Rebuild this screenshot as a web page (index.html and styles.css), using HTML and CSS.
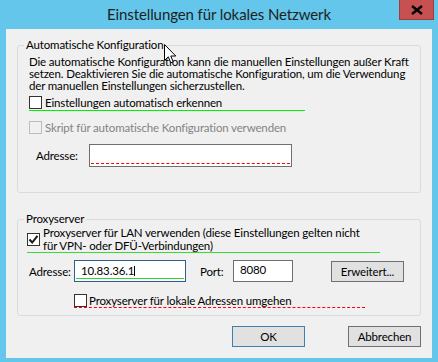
FILE: index.html
```html
<!DOCTYPE html>
<html>
<head>
<meta charset="utf-8">
<title>Einstellungen für lokales Netzwerk</title>
<link rel="stylesheet" href="styles.css">
</head>
<body>
<div class="window">
  <div class="titlebar">
    <span class="title">Einstellungen für lokales Netzwerk</span>
    <div class="close">
      <svg width="12" height="10" viewBox="0 0 12 10"><path d="M1 1 L11 9 M11 1 L1 9" stroke="#000" stroke-width="2.4"/></svg>
    </div>
  </div>

  <div class="client">
    <fieldset class="group group-auto">
      <legend>Automatische Konfiguration</legend>
      <div class="group-body">
        <p class="info">Die automatische Konfiguration kann die manuellen Einstellungen außer Kraft<br>setzen. Deaktivieren Sie die automatische Konfiguration, um die Verwendung<br>der manuellen Einstellungen sicherzustellen.</p>

        <label class="check mark-green">
          <span class="box"></span>
          <span>Einstellungen automatisch erkennen</span>
        </label>

        <label class="check disabled script-row">
          <span class="box"></span>
          <span>Skript für automatische Konfiguration verwenden</span>
        </label>

        <div class="field-row script-addr">
          <span class="field-label">Adresse:</span>
          <div class="textbox wide"><div class="dash-red"></div></div>
        </div>
      </div>
    </fieldset>

    <fieldset class="group group-proxy">
      <legend>Proxyserver</legend>
      <div class="group-body">
        <label class="check lan-row">
          <span class="box checked">
            <svg width="11" height="11" viewBox="0 0 11 11"><path d="M1.5 5.5 L4.2 8.5 L9.5 1.8" fill="none" stroke="#1a1a1a" stroke-width="2"/></svg>
          </span>
          <span>Proxyserver für LAN verwenden (diese Einstellungen gelten nicht<br>für VPN- oder DFÜ-Verbindungen)</span>
        </label>

        <div class="field-row proxy-addr">
          <span class="field-label">Adresse:</span>
          <div class="textbox addr focused"><span class="value">10.83.36.1</span><span class="caret"></span><span class="line-green"></span></div>
          <span class="field-label port-label">Port:</span>
          <div class="textbox port"><span class="value">8080</span></div>
          <button class="btn advanced">Erweitert...</button>
        </div>

        <label class="check bypass-row">
          <span class="box"></span>
          <span>Proxyserver für lokale Adressen umgehen</span>
        </label>
      </div>
    </fieldset>

    <div class="actions">
      <button class="btn default">OK</button>
      <button class="btn">Abbrechen</button>
    </div>
  </div>

  <svg class="pointer" width="13" height="21" viewBox="0 0 13 21">
    <path d="M0.5 0.5 L0.5 16.5 L4.3 12.8 L6.8 18.8 L9.2 17.8 L6.8 12 L11.8 12 Z" fill="#fff" stroke="#000" stroke-width="1"/>
  </svg>
</div>
</body>
</html>
```

FILE: styles.css
```css
body {
  margin: 0;
  background: #63c6ea;
  font-family: "Lato", "Liberation Sans", sans-serif;
  font-size: 11.5px;
  letter-spacing: -0.15px;
  color: #000;
}

.window {
  position: relative;
  width: 438px;
  height: 362px;
  background: #63c6ea;
  overflow: hidden;
}

/* title bar */
.titlebar {
  height: 29px;
  display: flex;
  align-items: center;
  justify-content: center;
}
.title {
  font-size: 15px;
  letter-spacing: -0.1px;
  color: #1e1e1e;
  margin-top: -1px;
}
.close {
  position: absolute;
  top: 0;
  left: 399px;
  width: 35px;
  height: 20px;
  box-sizing: border-box;
  background: #c75050;
  border: 1px solid #a03c3c;
  border-top: 0;
  display: flex;
  align-items: center;
  justify-content: center;
}

/* dialog body */
.client {
  margin: 0 6px;
  height: 329px;
  background: #f0f0f0;
  padding: 0 11px;
  display: flex;
  flex-direction: column;
}

.group {
  box-sizing: border-box;
  width: 404px;
  margin: 0;
  padding: 0;
  border: 1px solid #d5dce2;
  border-radius: 3px;
  min-width: 0;
}
.group legend {
  margin-left: 6px;
  padding: 0 2px;
  line-height: 14px;
}
.group-body {
  padding-left: 11px;
}
.group-auto {
  margin-top: 9px;
  padding-bottom: 25px;
}
.group-proxy {
  margin-top: 19px;
  padding-bottom: 7px;
}

.info {
  margin: 4px 0 0;
  line-height: 12px;
  white-space: nowrap;
}

/* checkboxes */
.check {
  display: flex;
  align-items: center;
  gap: 3px;
  line-height: 13px;
  white-space: nowrap;
}
.box {
  box-sizing: border-box;
  width: 13px;
  height: 13px;
  flex: none;
  border: 1px solid #333;
  background: #fff;
  display: flex;
  align-items: center;
  justify-content: center;
}
.check.disabled {
  color: #838383;
}
.check.disabled .box {
  border-color: #bcbcbc;
  background: #f0f0f0;
}

.mark-green {
  margin-top: 4px;
  width: 276px;
  padding-bottom: 1px;
  border-bottom: 1px solid #00f000;
}
.script-row {
  margin-top: 10px;
}

.lan-row {
  margin: 1px 0 0 -2px;
  width: 353px;
  line-height: 12.5px;
  border-bottom: 1px solid #3bd73b;
}
.bypass-row {
  margin: 12px 0 0 45px;
  width: 291px;
  gap: 2px;
  border-bottom: 1px dashed #f00;
}

/* text fields */
.field-row {
  display: flex;
  align-items: center;
}
.field-label {
  white-space: nowrap;
}
.textbox {
  box-sizing: border-box;
  position: relative;
  height: 23px;
  background: #fff;
  border: 1px solid #6f6f6f;
}
.script-addr {
  margin-top: 10px;
  padding-left: 7px;
}
.script-addr .field-label {
  width: 53px;
}
.textbox.wide {
  width: 203px;
  padding: 0 1px;
}
.dash-red {
  height: 18px;
  border-bottom: 1px dashed #f00;
}

.proxy-addr {
  margin-top: 7px;
}
.proxy-addr .field-label {
  width: 45px;
}
.textbox.addr {
  width: 112px;
  height: 22px;
  border-color: #2b5f8c;
  padding: 3px 0 0 6px;
}
.value {
  display: inline-block;
  line-height: 14px;
}
.caret {
  display: inline-block;
  width: 1px;
  height: 10px;
  background: #000;
  vertical-align: -1px;
}
.line-green {
  position: absolute;
  left: 1px;
  right: 1px;
  bottom: 2px;
  height: 1px;
  background: #2fd62f;
}
.proxy-addr .port-label {
  margin-left: 14px;
  width: 33px;
}
.textbox.port {
  width: 60px;
  height: 22px;
  padding: 2px 0 0 6px;
}

/* buttons */
.btn {
  box-sizing: border-box;
  width: 73px;
  height: 21px;
  padding: 0;
  font: inherit;
  letter-spacing: inherit;
  color: #000;
  background: #e1e1e1;
  border: 1px solid #707070;
}
.btn.advanced {
  margin-left: 38px;
  margin-top: 1px;
}
.btn.default {
  border-color: #3c7fb1;
}
.actions {
  margin-top: 10px;
  display: flex;
  justify-content: flex-end;
  gap: 43px;
  width: 404px;
}

.pointer {
  position: absolute;
  left: 164px;
  top: 44px;
}
```
